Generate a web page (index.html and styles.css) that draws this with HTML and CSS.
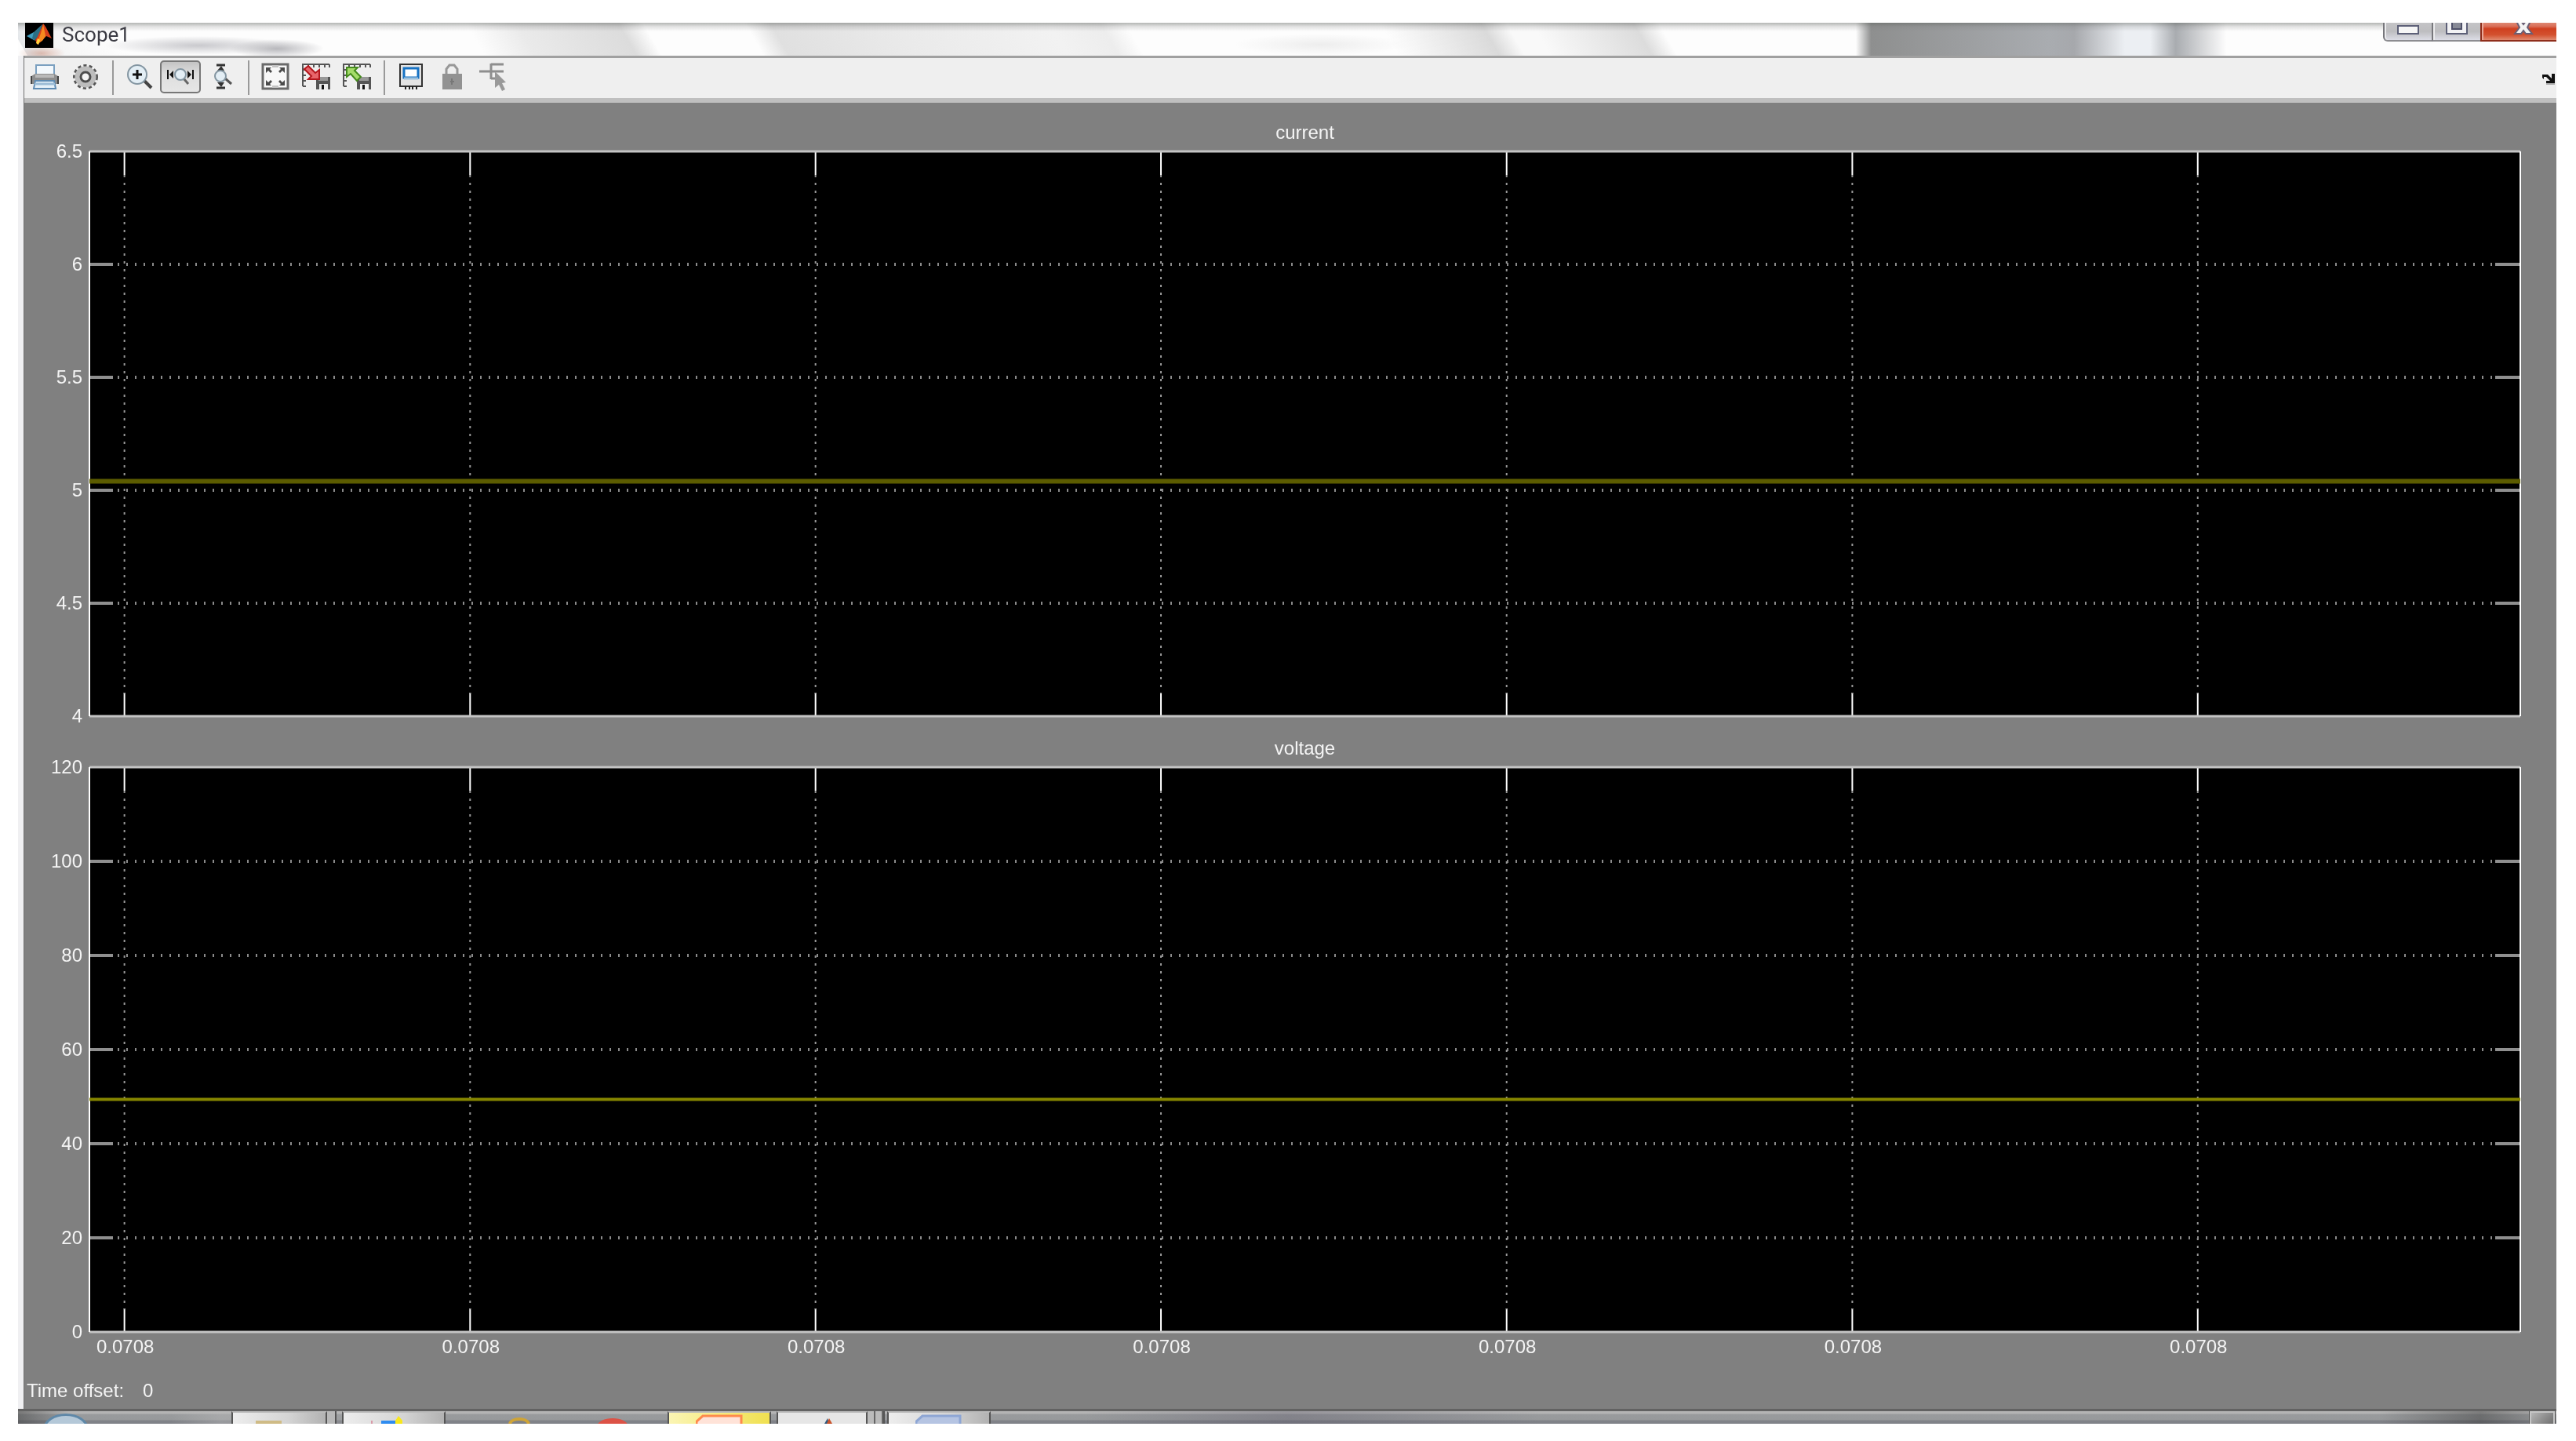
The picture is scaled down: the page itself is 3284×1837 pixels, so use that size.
FILE: index.html
```html
<!DOCTYPE html>
<html lang="en">
<head>
  <meta charset="UTF-8">
  <meta name="viewport" content="width=device-width, initial-scale=1.0">
  <title>Scope1</title>
  <link rel="stylesheet" href="styles.css">
</head>
<body>
  <main class="window">
    <header class="titlebar">
      <svg class="app-icon" width="36" height="32" viewBox="0 0 36 32">
        <rect width="36" height="32" fill="#000"/>
        <path d="M2 17l9-5 5 4-5 6z" fill="#3f9fc0"/>
        <path d="M11 12L22 2l-4 14-6 7-3-3z" fill="#2a6f86"/>
        <path d="M23 1c4 4 7 12 11 19l-7-3-6 6-5 5-3-6c4-5 6-12 10-21z" fill="#d8401c"/>
        <path d="M23 2c-2 10-5 17-8 25l7-4 4-6c-1-6-2-10-3-15z" fill="#f58a1f"/>
        <path d="M16 20l3 2-2 6-3-2z" fill="#ffd23c"/>
      </svg>
      <h1 class="title">Scope1</h1>
      <div class="window-controls">
        <button class="control minimize" aria-label="Minimize">
          <svg width="28" height="24" viewBox="0 0 28 24"><rect x="1" y="4" width="26" height="10" fill="#f6f6f6" stroke="#5d6078" stroke-width="2"/></svg>
        </button>
        <button class="control maximize" aria-label="Maximize">
          <svg width="28" height="24" viewBox="0 0 28 24"><path d="M1-2h26v16H1z" fill="#f2f2f4" stroke="#5d6078" stroke-width="2"/><path d="M8-2h12v10H8z" fill="#878a96" stroke="#4d5068" stroke-width="2"/></svg>
        </button>
        <button class="control close" aria-label="Close">
          <svg width="28" height="24" viewBox="0 0 28 24"><path d="M5-2h6l3 4 3-4h6l-4 8 6 8h-8l-3-4-3 4H3l6-8z" fill="#f4f4f4" stroke="#6b5f74" stroke-width="2"/></svg>
        </button>
      </div>
    </header>

    <div class="frame">
      <div class="toolbar" role="toolbar" aria-label="Scope tools">
        <button class="tool" aria-label="Print">
          <svg viewBox="0 0 36 36">
            <path d="M7 3h23v12H7z" fill="#f3f8fc" stroke="#7ba0c0" stroke-width="2"/>
            <path d="M1 17l5-3h24l5 3v10H1z" fill="#8d8d8d"/>
            <path d="M1 17v10M35 17v10" stroke="#444" stroke-width="2"/>
            <path d="M6 15h24v4H6z" fill="#b9b9b9"/>
            <path d="M6 23h24l2 10H4z" fill="#e6f1f9" stroke="#5f8cb4" stroke-width="2"/>
            <path d="M5 27h26" stroke="#9cbcd6" stroke-width="3"/>
          </svg>
        </button>
        <button class="tool" aria-label="Parameters">
          <svg viewBox="0 0 36 36">
            <circle cx="18" cy="18" r="14" fill="none" stroke="#555" stroke-width="4" stroke-dasharray="4 3"/>
            <circle cx="18" cy="18" r="10" fill="none" stroke="#bdbdbd" stroke-width="7"/>
            <circle cx="18" cy="18" r="6" fill="#f4f4f4" stroke="#4c4c4c" stroke-width="3"/>
          </svg>
        </button>
        <span class="separator"></span>
        <button class="tool" aria-label="Zoom">
          <svg viewBox="0 0 36 36">
            <path d="M24 23l9 9" stroke="#444" stroke-width="4"/>
            <circle cx="15" cy="15" r="12" fill="#e3eef5" stroke="#8496a2" stroke-width="2"/>
            <path d="M15 9v12M9 15h12" stroke="#111" stroke-width="3"/>
          </svg>
        </button>
        <button class="tool active" aria-label="Zoom X-axis" aria-pressed="true">
          <svg viewBox="0 0 36 36">
            <path d="M2 9v12M34 9v12" stroke="#111" stroke-width="2"/>
            <path d="M9 10v10l-5-5zM27 10v10l5-5z" fill="#111"/>
            <path d="M22 20l6 7" stroke="#666" stroke-width="3"/>
            <circle cx="18" cy="15" r="7" fill="#e3eef5" stroke="#8496a2" stroke-width="2"/>
          </svg>
        </button>
        <button class="tool" aria-label="Zoom Y-axis">
          <svg viewBox="0 0 36 36">
            <path d="M12 3h11M12 32h11" stroke="#333" stroke-width="3"/>
            <path d="M13 10h9l-4-6zM13 25h9l-4 6z" fill="#333"/>
            <path d="M23 20l8 7" stroke="#555" stroke-width="3"/>
            <circle cx="17" cy="17" r="7" fill="#e3eef5" stroke="#8496a2" stroke-width="2"/>
          </svg>
        </button>
        <span class="separator"></span>
        <button class="tool" aria-label="Autoscale">
          <svg viewBox="0 0 36 36">
            <rect x="2" y="2" width="32" height="31" fill="#f8f8f8" stroke="#6a6a6a" stroke-width="3"/>
            <path d="M6 6h7l-2 2 3 3-2 2-3-3-3 3zM30 6h-7l2 2-3 3 2 2 3-3 3 3zM6 29h7l-2-2 3-3-2-2-3 3-3-3zM30 29h-7l2-2-3-3 2-2 3 3 3-3z" fill="#4a4a4a"/>
            <path d="M14 3h8v3h-8zM14 29h8v3h-8z" fill="#c4c4c4"/>
          </svg>
        </button>
        <button class="tool" aria-label="Save axes settings">
          <svg viewBox="0 0 36 36">
            <path d="M1 30V2h34M1 9h4M1 16h4M1 23h4M1 30h4M8 2v4M15 2v4M22 2v4M29 2v4M35 2v4" fill="none" stroke="#555" stroke-width="2"/>
            <path d="M18 18h18v16H18z" fill="#555"/><path d="M21 18h12v5H21z" fill="#999"/><path d="M22 27h11v7H22z" fill="#eee"/><path d="M25 28h3v6h-3z" fill="#111"/>
            <path d="M3 8l5-4 9 9 5-4v12H8l4-4z" fill="#e8656a" stroke="#b3161c" stroke-width="2"/>
          </svg>
        </button>
        <button class="tool" aria-label="Restore saved axes settings">
          <svg viewBox="0 0 36 36">
            <path d="M1 30V2h34M1 9h4M1 16h4M1 23h4M1 30h4M8 2v4M15 2v4M22 2v4M29 2v4M35 2v4" fill="none" stroke="#555" stroke-width="2"/>
            <path d="M18 18h18v16H18z" fill="#555"/><path d="M21 18h12v5H21z" fill="#999"/><path d="M22 27h11v7H22z" fill="#eee"/><path d="M25 28h3v6h-3z" fill="#111"/>
            <path d="M5 18V6h14l-4 4 8 8-5 5-8-9z" fill="#a5dc6a" stroke="#448a1c" stroke-width="2"/>
          </svg>
        </button>
        <span class="separator"></span>
        <button class="tool" aria-label="Floating scope">
          <svg viewBox="0 0 36 36">
            <rect x="4" y="2" width="28" height="28" fill="#e4e4e4" stroke="#333" stroke-width="2"/>
            <rect x="9" y="7" width="18" height="12" fill="#fff" stroke="#1672c4" stroke-width="3"/>
            <path d="M9 20h18" stroke="#9cc0dc" stroke-width="3"/>
            <path d="M11 30v4M16 30v4M20 30v4M25 30v4" stroke="#222" stroke-width="2"/>
          </svg>
        </button>
        <button class="tool" aria-label="Lock axes" disabled>
          <svg viewBox="0 0 36 36">
            <path d="M11 15V8l4-5h6l4 5v7" fill="none" stroke="#989898" stroke-width="3"/>
            <path d="M6 14h25v20H6z" fill="#929292"/>
            <path d="M18 20v8M16 24h5" stroke="#777" stroke-width="2"/>
          </svg>
        </button>
        <button class="tool" aria-label="Signal selection" disabled>
          <svg viewBox="0 0 36 36">
            <path d="M1 11h31M16 1v20M16 2h16M16 20h8" fill="none" stroke="#8e8e8e" stroke-width="3"/>
            <path d="M21 11l14 14-5 1 4 8-4 2-4-8-5 4z" fill="#999"/>
          </svg>
        </button>
        <button class="dock" aria-label="Dock">
          <svg width="16" height="16" viewBox="0 0 16 16"><path d="M0 6V2h7l5 5V1h4v12H5V10h5L5 5H2v3z" fill="#111"/><path d="M5 13h11v2H5z" fill="#aaa"/></svg>
        </button>
      </div>

      <section class="scope">
        <figure class="axes">
          <figcaption class="axes-title">current</figcaption>
          <svg class="plot" id="current"></svg>
        </figure>
        <figure class="axes">
          <figcaption class="axes-title">voltage</figcaption>
          <svg class="plot" id="voltage"></svg>
        </figure>
        <footer class="status">
          <span>Time offset:</span>
          <span>0</span>
        </footer>
      </section>
    </div>

    <nav class="taskbar" aria-label="Taskbar">
      <button class="start" aria-label="Start"></button>
      <button class="task" aria-label="Explorer">
        <svg viewBox="0 0 60 19"><path d="M0 15h33v4H0z" fill="#cfbb86"/></svg>
      </button>
      <span class="stack"></span>
      <button class="task" aria-label="Media">
        <svg viewBox="0 0 60 19"><path d="M14 15h26v4H14z" fill="#2f8cf0"/><path d="M1 15h2v4H1z" fill="#d99aa8"/><path d="M32 19v-4l4-6 5 6v4z" fill="#f8e71c"/></svg>
      </button>
      <span class="pinned">
        <svg width="28" height="19" viewBox="0 0 28 19"><path d="M2 19c2-8 22-8 24 0" fill="none" stroke="#cfa437" stroke-width="4"/></svg>
        <svg width="38" height="19" viewBox="0 0 38 19"><ellipse cx="19" cy="21" rx="19" ry="9" fill="#dc5246"/></svg>
      </span>
      <button class="task alert" aria-label="Presentation">
        <svg viewBox="0 0 60 19"><path d="M1 19v-3l8-7h49v10" fill="#ffe3d8" stroke="#ff8a4c" stroke-width="3"/></svg>
      </button>
      <button class="task narrow" aria-label="MATLAB">
        <svg viewBox="0 0 60 19"><path d="M33 19l4-7 2 7z" fill="#31597c"/><path d="M36 19l3-7 4 7z" fill="#c9532c"/></svg>
      </button>
      <span class="stack wide"></span>
      <button class="task" aria-label="Document">
        <svg viewBox="0 0 60 19"><path d="M1 19v-3l8-7h48v10" fill="#b5c4e2" stroke="#8ea6d4" stroke-width="3"/></svg>
      </button>
      <button class="show-desktop" aria-label="Show desktop"></button>
    </nav>
  </main>

  <script src="scope.js"></script>
</body>
</html>
```
FILE: styles.css
```css
:root {
  --scope-bg: #808080;
  --chrome: #efefef;
  --line: #a0a0a0;
}

* {
  margin: 0;
  padding: 0;
  box-sizing: border-box;
}

body {
  min-height: 100vh;
  display: flex;
  padding: 29px 25px 22px 23px;
  background: #fff;
  font-family: "Liberation Sans", Arial, sans-serif;
  font-size: 24px;
}

button {
  border: none;
  background: none;
  font: inherit;
}

.window {
  flex: 1;
  min-width: 0;
  display: flex;
  flex-direction: column;
  overflow: hidden;
}

/* Title bar */
.titlebar {
  position: relative;
  display: flex;
  align-items: flex-start;
  height: 42px;
  padding-left: 9px;
  overflow: hidden;
  background:
    linear-gradient(to bottom, rgba(90, 95, 90, 0.45), rgba(120, 120, 120, 0.2) 5px, transparent 11px),
    radial-gradient(ellipse 60px 12px at 330px 33px, #b8b8bc, transparent),
    radial-gradient(ellipse 120px 12px at 230px 29px, #c9c9cd, transparent),
    radial-gradient(ellipse 30px 10px at 30px 39px, #e8c4b8, transparent),
    radial-gradient(ellipse 110px 14px at 1660px 28px, #ededed, transparent),
    linear-gradient(to right, transparent 72.4%, #8e8f8f 73%, #a9acb0 80%, #a6a8ac 81%, #eceff3 83%, #eceff3 84%, #a9acb0 85%, transparent 87%),
    #fdfdfd;
}

/* Slanted glass reflections */
.titlebar::before {
  content: "";
  position: absolute;
  inset: 0;
  transform: skewX(30deg);
  background: linear-gradient(to right, #e6e9ec 0, #f6f6f6 1%, transparent 4%, transparent 18%, #ececec 20%, #dedede 24%, transparent 25%, transparent 29%, #e2e2e2 30%, #ececec 35%, #f4f4f4 41%, #efefef 43%, transparent 44%, transparent 54%, #dcdcdc 58%, #fbfbfb 59%, #fbfbfb 60%, #dedede 64%, transparent 65%);
  mix-blend-mode: multiply;
}

.app-icon,
.title,
.window-controls {
  position: relative;
}

.app-icon {
  margin-right: 11px;
}

.title {
  font: 400 26px/31px Roboto, "Segoe UI", sans-serif;
  color: #3c3c44;
}

.window-controls {
  display: flex;
  height: 24px;
  margin-left: auto;
}

.control {
  width: 62px;
  display: flex;
  justify-content: center;
  border-left: 2px solid #77777c;
  border-bottom: 2px solid #8c8c90;
  background: linear-gradient(#c4c4c6, #bdbdc0 50%, #dcdde6);
  box-shadow: inset 2px 0 #ececee;
}

.minimize {
  border-bottom-left-radius: 6px;
}

.close {
  width: 97px;
  border-color: #8e2d1a;
  background: linear-gradient(#de8872 0, #d9705a 20%, #cf4020 35%, #d3512f 70%, #e08a70);
  box-shadow: inset 2px 0 #e8a899;
}

.close svg {
  margin-left: 10px;
}

/* Client area */
.frame {
  flex: 1;
  display: flex;
  flex-direction: column;
  border-left: 1px solid #707070;
  margin-left: 7px;
  box-shadow: -7px 0 #f0f0f2;
}

.toolbar {
  display: flex;
  align-items: flex-start;
  height: 60px;
  padding-top: 3px;
  border-top: 3px solid var(--line);
  border-bottom: 6px solid #bfbfbf;
  background: var(--chrome);
}

.tool {
  width: 52px;
  height: 42px;
  display: flex;
  align-items: center;
  justify-content: center;
}

.tool svg {
  width: 36px;
  height: 36px;
}

.tool.active {
  border: 2px solid #777;
  border-radius: 5px;
  background: linear-gradient(#c4c4c4, #dedede 40%, #e6e6e6);
}

.separator {
  width: 17px;
  height: 44px;
  background: linear-gradient(#999, #999) center / 2px 100% no-repeat;
}

.dock {
  margin: 16px 2px 0 auto;
  display: flex;
}

.scope {
  flex: 1;
  display: flex;
  flex-direction: column;
  gap: 3px;
  background: var(--scope-bg);
  color: #f4f4f4;
}

.axes {
  flex: 1;
  display: flex;
  flex-direction: column;
  padding: 0 46px 0 83px;
}

.axes-title {
  height: 62px;
  padding-top: 24px;
  line-height: 28px;
  text-align: center;
}

.plot {
  flex: 1;
  width: 100%;
  height: 0;
  overflow: visible;
  font-size: 24px;
}

.plot text {
  fill: #f4f4f4;
}

.plot .area {
  fill: #000;
  stroke: none;
}

.plot .side {
  stroke: #fff;
  stroke-width: 2;
}

.plot .edge {
  stroke: #c4c4c4;
  stroke-width: 3;
}

.plot .grid-x {
  stroke: #999;
  stroke-width: 2;
  stroke-dasharray: 3 7;
}

.plot .grid-y {
  stroke: #8a8a8a;
  stroke-width: 4;
  stroke-dasharray: 2 9;
}

.plot .tick-x {
  stroke: #fff;
  stroke-width: 2;
}

.plot .tick-y {
  stroke: #8f8f8f;
  stroke-width: 4;
}

.plot .trace {
  stroke: #858500;
  stroke-width: 4;
}

#current .trace {
  stroke: #5c5c00;
  stroke-width: 6;
}

.status {
  display: flex;
  gap: 24px;
  height: 95px;
  padding: 58px 0 0 3px;
  line-height: 28px;
}

/* Taskbar */
.taskbar {
  display: flex;
  height: 19px;
  overflow: hidden;
  border-top: 3px solid #626262;
  background:
    linear-gradient(to right, rgba(60, 60, 60, 0.5), transparent 2%, transparent 6%, rgba(190, 190, 190, 0.4) 8%, transparent 15%, transparent 42%, rgba(80, 75, 95, 0.3) 50%, transparent 60%, transparent 93%, rgba(40, 40, 40, 0.4) 97%, transparent),
    linear-gradient(#b4b4b4 3px, #999b9d 4px, #97999b 11px, #808288 12px);
}

.start {
  flex: none;
  width: 58px;
  height: 40px;
  margin: 3px 182px 0 32px;
  border: 3px solid #5f88a8;
  border-radius: 50%;
  background: #b4c8d8;
}

.task {
  flex: none;
  width: 132px;
  display: flex;
  justify-content: center;
  border: 2px solid #555;
  border-top-color: #bbb;
  border-bottom: none;
  background: linear-gradient(to right, #ededed, #d4d4d4 60%, #b2b2b2);
}

.task svg {
  flex: none;
  width: 60px;
  height: 19px;
  margin-top: -5px;
}

.start + .task {
  width: 122px;
}

.task.narrow {
  width: 116px;
  margin-left: 7px;
  background: #e6e6e6;
}

.task.alert {
  background: linear-gradient(to right, #fbf5b4, #f0e050);
}

.stack {
  flex: none;
  width: 12px;
  margin-right: 7px;
  border-right: 2px solid #555;
  background: #b8b8b8;
}

.stack.wide {
  width: 22px;
  margin-right: 3px;
  background: repeating-linear-gradient(to right, #bbb 0, #bbb 8px, #666 8px, #666 10px);
}

.pinned {
  flex: none;
  width: 283px;
  display: flex;
  gap: 86px;
  padding-left: 80px;
}

.pinned svg {
  flex: none;
  margin-top: -3px;
}

.show-desktop {
  width: 32px;
  margin: 0 2px 0 auto;
  border: 2px solid #c6c6c6;
  border-bottom: none;
  background: linear-gradient(135deg, #b5b5b5, #707070);
  outline: 1px solid #555;
}
```
FILE: scope.js
```js
const NS = 'http://www.w3.org/2000/svg';
const TICK = 30;

// Grid positions along the time axis, in percent of the plot width
const timeTicks = [1.44, 15.66, 29.87, 44.08, 58.3, 72.52, 86.73];

function add(parent, tag, attrs, text) {
  const el = document.createElementNS(NS, tag);
  for (const key in attrs) el.setAttribute(key, attrs[key]);
  if (text !== undefined) el.textContent = text;
  parent.appendChild(el);
  return el;
}

function line(parent, cls, x1, y1, x2, y2) {
  add(parent, 'line', { class: cls, x1, y1, x2, y2 });
}

function drawAxes(id, { min, max, step, value, timeLabels }) {
  const svg = document.getElementById(id);
  add(svg, 'rect', { class: 'area', width: '100%', height: '100%' });

  // Zero-origin groups on the far edges, so ticks can be measured back from them
  const bottom = add(svg, 'svg', { y: '100%', overflow: 'visible' });
  const right = add(svg, 'svg', { x: '100%', overflow: 'visible' });

  timeTicks.forEach(t => {
    const x = t + '%';
    line(svg, 'grid-x', x, TICK, x, '96%');
    line(svg, 'tick-x', x, 0, x, TICK);
    line(bottom, 'tick-x', x, -TICK, x, 0);
    if (timeLabels) {
      add(bottom, 'text', { x, y: 27, dx: 1, 'text-anchor': 'middle' }, '0.0708');
    }
  });

  for (let v = min; v <= max; v += step) {
    const y = (max - v) / (max - min) * 100 + '%';
    if (v > min && v < max) {
      line(svg, 'grid-y', TICK + 6, y, '99%', y);
      line(svg, 'tick-y', 0, y, TICK, y);
      line(right, 'tick-y', -TICK - 2, y, 0, y);
    }
    add(svg, 'text', { x: -9, y, dy: 8, 'text-anchor': 'end' }, v);
  }

  line(svg, 'edge', 0, 0, '100%', 0);
  line(svg, 'edge', 0, '100%', '100%', '100%');
  line(svg, 'side', 0, 0, 0, '100%');
  line(svg, 'side', '100%', 0, '100%', '100%');

  const y = (max - value) / (max - min) * 100 + '%';
  line(svg, 'trace', 0, y, '100%', y);
}

drawAxes('current', { min: 4, max: 6.5, step: 0.5, value: 5.04 });
drawAxes('voltage', { min: 0, max: 120, step: 20, value: 49.4, timeLabels: true });
```
